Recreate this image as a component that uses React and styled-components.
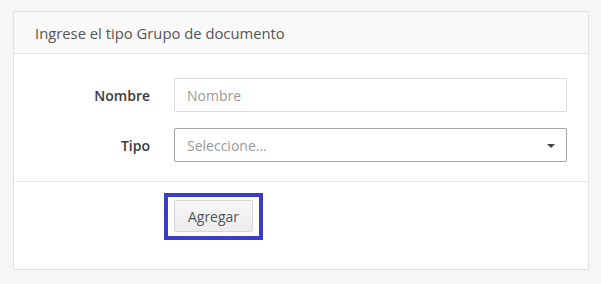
import React from 'react';
import styled, { createGlobalStyle } from 'styled-components';

const GlobalStyle = createGlobalStyle`
    body {
        margin: 0;
        background: #f6f6f6;
        font-family: "Open Sans", "Liberation Sans", sans-serif;
    }
`

const Page = styled.div`
    padding: 11px 12px 0 13px;
`

const Card = styled.section`
    background: #ffffff;
    border: 1px solid #e2e2e2;
    height: 257px;
    display: flex;
    flex-direction: column;
`

const CardHeader = styled.header`
    display: flex;
    align-items: center;
    height: 41px;
    padding-left: 21px;
    background: #f9f9f9;
    border-bottom: 1px solid #e4e4e4;
    color: #555;
    font-size: 14.8px;
`

const FormBody = styled.div`
    display: grid;
    grid-template-columns: 136px 1fr;
    column-gap: 24px;
    row-gap: 16px;
    align-items: center;
    padding: 24px 21px 19px 0;
    border-bottom: 1px solid #e5e5e5;
`

const Label = styled.label`
    text-align: right;
    font-weight: 600;
    font-size: 14px;
    color: #3a3a3a;
`

const Field = styled.div`
    position: relative;
    height: 34px;
    box-sizing: border-box;
    border: 1px solid ${p => (p.$dark ? '#a5a5a5' : '#dcdcdc')};
    border-radius: 2px;
    display: flex;
    align-items: center;
    padding: 0 12px;
    font-size: 14px;
    color: #999;
`

const Caret = styled.span`
    position: absolute;
    right: 11px;
    top: 15px;
    width: 0;
    height: 0;
    border-left: 4px solid transparent;
    border-right: 4px solid transparent;
    border-top: 4px solid #444;
`

const Footer = styled.div`
    padding: 11px 0 0 150px;
`

const Highlight = styled.div`
    display: inline-block;
    border: 4px solid #3b3bcc;
    padding: 3px 6px 4px 6px;
`

const Button = styled.button`
    display: block;
    height: 32px;
    width: 79px;
    font-family: inherit;
    font-size: 14px;
    color: #555;
    background: linear-gradient(#f7f7f7, #ececec);
    border: 1px solid #d6d6d6;
    border-radius: 2px;
`

const App = () => {
    return (
        <Page>
            <GlobalStyle />
            <Card>
                <CardHeader>Ingrese el tipo Grupo de documento</CardHeader>
                <FormBody>
                    <Label>Nombre</Label>
                    <Field>Nombre</Field>
                    <Label>Tipo</Label>
                    <Field $dark>
                        Seleccione...
                        <Caret />
                    </Field>
                </FormBody>
                <Footer>
                    <Highlight>
                        <Button>Agregar</Button>
                    </Highlight>
                </Footer>
            </Card>
        </Page>
    )
}

export default App;
